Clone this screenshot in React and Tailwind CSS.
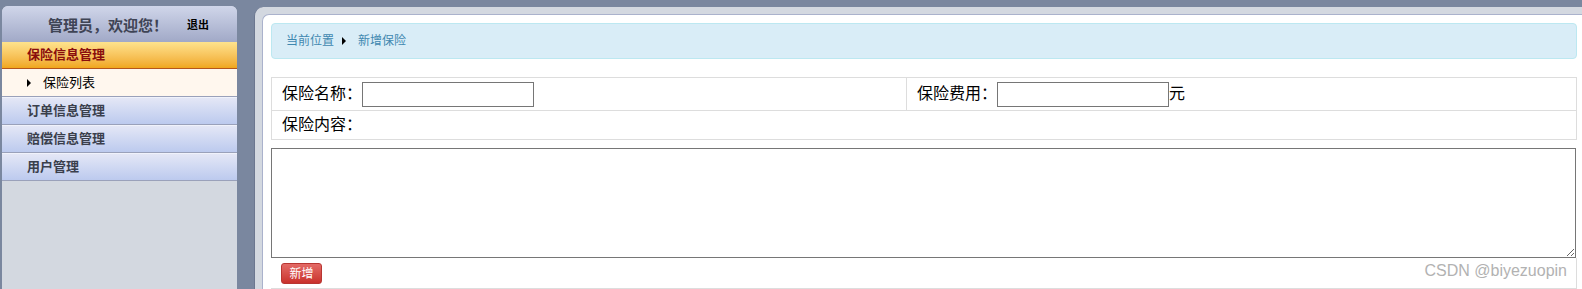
const menus = ['订单信息管理', '赔偿信息管理', '用户管理'];

const Arrow = () => (
  <span className="inline-block h-0 w-0 border-y-[4px] border-l-[4px] border-y-transparent border-l-black" />
);

const Sidebar = () => (
  <div className="h-full w-[235px] shrink-0 overflow-hidden rounded-t-[6px] bg-[#d3d8e0]">
    <div className="flex h-[36px] items-center bg-gradient-to-b from-[#d0d6ea] to-[#a1a9c7] pl-[46px] pt-[2px]">
      <span className="font-['Noto_Sans_CJK_SC',sans-serif] text-[15px] font-bold text-[#3f4455]">管理员，欢迎您！</span>
      <span className="ml-[19px] text-[11px] font-bold text-black">退出</span>
    </div>
    <div className="flex h-[27px] items-center border-b border-[#b4561c] bg-gradient-to-b from-[#fee38c] to-[#f0a71a] pl-[25px] text-[13px] font-bold text-[#8a0d0d]">
      保险信息管理
    </div>
    <div className="flex h-[28px] items-center border-b border-[#9aa1ba] bg-[#fff7ee] pl-[25px] text-[13px] text-black">
      <Arrow />
      <span className="ml-[12px]">保险列表</span>
    </div>
    {menus.map((m) => (
      <div
        key={m}
        className="flex h-[28px] items-center border-b border-[#9aa1ba] border-t border-t-[#f0f2fb] bg-gradient-to-b from-[#e4e7f6] to-[#bccaee] pl-[25px] text-[13px] font-bold text-[#3a3f4c]"
      >
        {m}
      </div>
    ))}
  </div>
);

const Main = () => (
  <div className="mt-[1px] ml-[17px] flex-1 rounded-tl-[9px] border-l border-[#6c7790] bg-[#d3d8e0] pl-[7px] pt-[7px]">
    <div className="h-full rounded-tl-[7px] border-l border-t border-[#aab2cc] bg-white pl-[8px] pr-[5px] pt-[8px]">
      <div className="flex h-[36px] items-center rounded-[4px] border border-[#bce8f1] bg-[#d9edf7] pl-[14px] text-[12px] text-[#3f88b0]">
        <span>当前位置</span>
        <span className="ml-[8px]">
          <Arrow />
        </span>
        <span className="ml-[12px]">新增保险</span>
      </div>

      <div className="mt-[18px] text-[16px] text-black">
        <div className="flex h-[33px] border-x border-t border-[#dddddd]">
          <div className="flex w-[635px] items-center border-r border-[#dddddd] pl-[10px]">
            <span>保险名称：</span>
            <input className="h-[25px] w-[172px] border border-[#767676] outline-none" />
          </div>
          <div className="flex items-center pl-[10px]">
            <span>保险费用：</span>
            <input className="h-[25px] w-[172px] border border-[#767676] outline-none" />
            <span>元</span>
          </div>
        </div>
        <div className="flex h-[30px] items-center border border-[#dddddd] pl-[10px]">保险内容：</div>
      </div>

      <textarea className="mt-[8px] block h-[110px] w-[1305px] resize border border-[#767676] outline-none" />

      <div className="h-[31px] border-b border-r border-[#dddddd] pl-[10px] pt-[5px]">
        <button className="flex h-[21px] w-[41px] items-center justify-center rounded-[3px] border border-[#b83632] bg-gradient-to-b from-[#e36a66] to-[#c9302c] text-[12px] text-white">
          新增
        </button>
      </div>
    </div>
  </div>
);

const App = () => (
  <div
    className="relative flex h-[289px] w-[1582px] overflow-hidden bg-[#7a879f] pl-[2px] pt-[6px]"
    style={{ fontFamily: '"Liberation Sans", "Noto Sans CJK SC", sans-serif' }}
  >
    <Sidebar />
    <Main />
    <span className="absolute bottom-[6px] right-[15px] text-[16px] text-[#b2b2b2]">CSDN @biyezuopin</span>
  </div>
);

export default App;
